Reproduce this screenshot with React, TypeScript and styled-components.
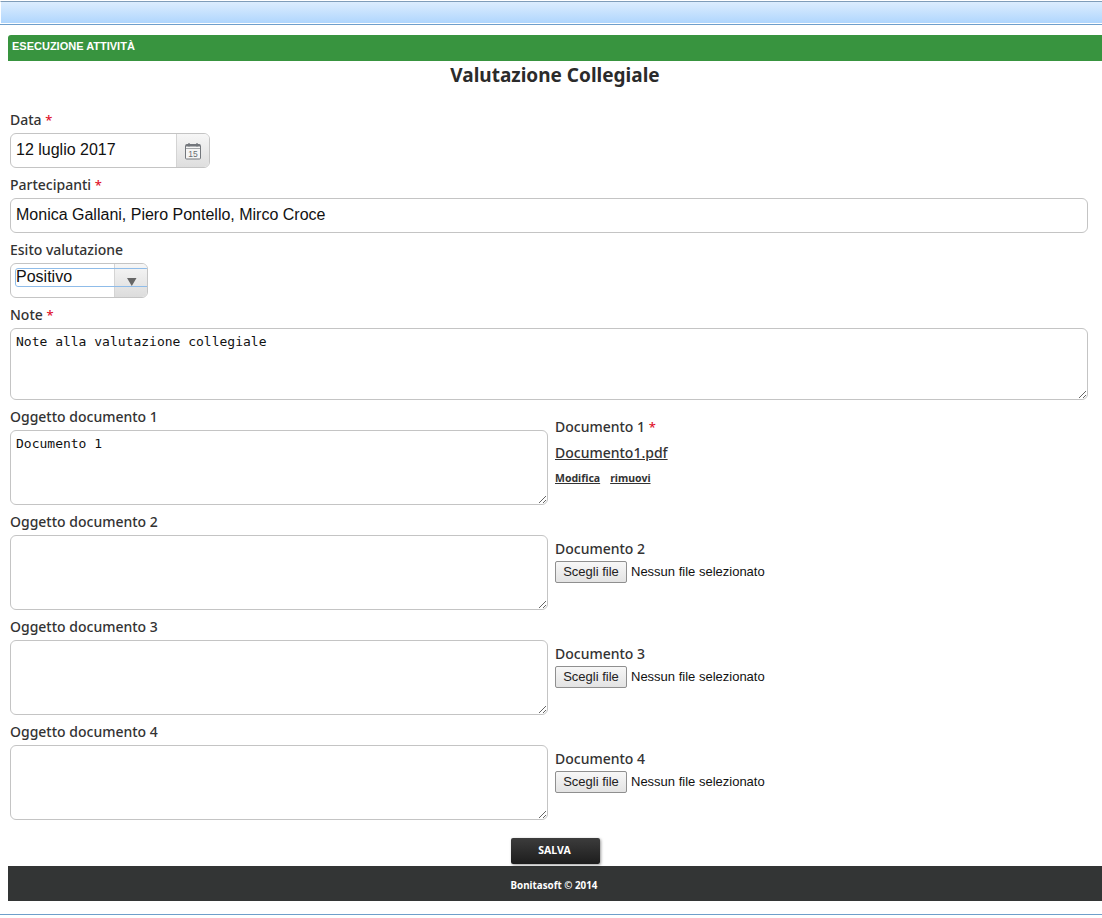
import React from "react"
import { createGlobalStyle, styled } from "styled-components"

const labelFont = `"Noto Sans", "Open Sans", sans-serif`
const inputFont = `"Liberation Sans", Arial, sans-serif`

const GlobalStyle = createGlobalStyle`
  html, body {
    margin: 0;
    padding: 0;
    background: #fff;
    overflow: hidden;
  }
  body {
    font-family: ${labelFont};
    color: #333;
  }
`

const CalendarIcon = () => (
  <svg width="18" height="18" viewBox="0 0 18 18" fill="none">
    <rect x="1.5" y="2.5" width="15" height="14.5" rx="1" stroke="#73777c" strokeWidth="1" fill="#f5f5f5" />
    <path d="M2 3.5h14" stroke="#73777c" strokeWidth="2" />
    <path d="M5 1v3.5M13 1v3.5" stroke="#73777c" strokeWidth="1.3" />
    <path d="M2 6.5h14" stroke="#a4a7aa" strokeWidth="1" />
    <text x="9" y="15" textAnchor="middle" fontSize="8.5" fontFamily="Liberation Sans" fill="#6a6e73">15</text>
  </svg>
)

const ArrowIcon = () => (
  <svg width="10" height="8" viewBox="0 0 10 8">
    <path d="M0 0h9.5L4.75 8z" fill="#666" />
  </svg>
)

const DocumentRow: React.FC<{ index: number; children: React.ReactNode; first?: boolean }> = ({
  index,
  children,
  first,
}) => (
  <Row>
    <RowLeft>
      <Label>Oggetto documento {index}</Label>
      <Area $height={75} readOnly defaultValue={first ? "Documento 1" : ""} />
    </RowLeft>
    <RowRight $first={first}>{children}</RowRight>
  </Row>
)

const FilePicker = () => (
  <FileLine>
    <FileButton type="button">Scegli file</FileButton>
    <FileName>Nessun file selezionato</FileName>
  </FileLine>
)

const App: React.FC = () => {
  return (
    <>
      <GlobalStyle />
      <TopBar />
      <Content>
        <Header>ESECUZIONE ATTIVITÀ</Header>
        <Title>Valutazione Collegiale</Title>
        <Form>
          <Field>
            <Label>
              Data <Star>*</Star>
            </Label>
            <DateBox>
              <DateValue>12 luglio 2017</DateValue>
              <DateAddon>
                <CalendarIcon />
              </DateAddon>
            </DateBox>
          </Field>
          <Field>
            <Label>
              Partecipanti <Star>*</Star>
            </Label>
            <TextInput readOnly defaultValue="Monica Gallani, Piero Pontello, Mirco Croce" />
          </Field>
          <Field>
            <Label>Esito valutazione</Label>
            <SelectBox>
              <SelectValue>Positivo</SelectValue>
              <SelectAddon>
                <ArrowIcon />
              </SelectAddon>
              <FocusRing />
            </SelectBox>
          </Field>
          <Field>
            <Label>
              Note <Star>*</Star>
            </Label>
            <Area $height={72} readOnly defaultValue="Note alla valutazione collegiale" />
          </Field>
          <DocumentRow index={1} first>
            <Label>
              Documento 1 <Star>*</Star>
            </Label>
            <FileLink href="#">Documento1.pdf</FileLink>
            <FileActions>
              <FileAction href="#">Modifica</FileAction>
              <FileAction href="#">rimuovi</FileAction>
            </FileActions>
          </DocumentRow>
          <DocumentRow index={2}>
            <Label>Documento 2</Label>
            <FilePicker />
          </DocumentRow>
          <DocumentRow index={3}>
            <Label>Documento 3</Label>
            <FilePicker />
          </DocumentRow>
          <DocumentRow index={4}>
            <Label>Documento 4</Label>
            <FilePicker />
          </DocumentRow>
          <Actions>
            <SaveButton type="button">SALVA</SaveButton>
          </Actions>
        </Form>
        <Footer>Bonitasoft © 2014</Footer>
      </Content>
      <BottomLine />
    </>
  )
}

const TopBar = styled.div`
  height: 21px;
  margin-top: 1px;
  border-top: 1px solid #7f9db9;
  border-bottom: 1px solid #fff;
  border-left: 1px solid #fff;
  box-shadow: 0 1px 0 #6f9fcb;
  background: linear-gradient(to bottom, #dcedfe, #b0d6fd);
`

const Content = styled.div`
  margin: 11px 0 0 8px;
`

const Header = styled.div`
  height: 26px;
  box-sizing: border-box;
  padding: 5px 4px 0;
  background: #38943f;
  border-top-left-radius: 3px;
  color: #fff;
  font: bold 11px/13px ${inputFont};
`

const Title = styled.h1`
  margin: 0;
  height: 49px;
  text-align: center;
  color: #2b2b2b;
  font: bold 19px/28px ${labelFont};
`

const Form = styled.div`
  padding: 0 14px 0 2px;
`

const Field = styled.div`
  margin-bottom: 7px;
`

const Label = styled.div`
  height: 20px;
  margin-bottom: 3px;
  font: 500 14px/20px ${labelFont};
  color: #333;
`

const Star = styled.span`
  color: #e0112b;
  font-size: 13px;
`

const DateBox = styled.div`
  width: 200px;
  height: 35px;
  box-sizing: border-box;
  display: flex;
  border: 1px solid #c4c4c4;
  border-radius: 6px;
  overflow: hidden;
`

const DateValue = styled.div`
  flex: 1;
  padding-left: 5px;
  font: 16px/32px ${inputFont};
  color: #111;
`

const DateAddon = styled.div`
  width: 33px;
  box-sizing: border-box;
  display: flex;
  align-items: center;
  justify-content: center;
  border-left: 1px solid #d4d4d4;
  background: linear-gradient(to bottom, #f6f6f6, #dedede);
`

const TextInput = styled.input`
  display: block;
  width: 100%;
  height: 35px;
  box-sizing: border-box;
  padding: 0 5px 2px;
  border: 1px solid #c4c4c4;
  border-radius: 6px;
  outline: none;
  font: 16px ${inputFont};
  color: #111;
`

const SelectBox = styled.div`
  position: relative;
  width: 138px;
  height: 35px;
  box-sizing: border-box;
  display: flex;
  border: 1px solid #c4c4c4;
  border-radius: 6px;
  overflow: hidden;
`

const SelectValue = styled.div`
  flex: 1;
  padding: 4px 0 0 5px;
  font: 16px/18px ${inputFont};
  color: #111;
`

const SelectAddon = styled.div`
  width: 33px;
  display: flex;
  align-items: center;
  justify-content: center;
  padding: 2px 0 0 2px;
  box-sizing: border-box;
  border-left: 1px solid #d4d4d4;
  background: linear-gradient(to bottom, #f6f6f6, #dcdcdc);
`

const FocusRing = styled.div`
  position: absolute;
  top: 4px;
  left: 4px;
  right: -4px;
  height: 17px;
  border: 1.5px solid #8fbce9;
  border-radius: 3px;
`

const Area = styled.textarea<{ $height: number }>`
  display: block;
  width: 100%;
  height: ${({ $height }) => $height}px;
  box-sizing: border-box;
  padding: 5px;
  border: 1px solid #c4c4c4;
  border-radius: 6px;
  outline: none;
  font: 13px/15px "DejaVu Sans Mono", monospace;
  color: #111;
`

const Row = styled.div`
  display: flex;
  margin-bottom: 7px;
`

const RowLeft = styled.div`
  width: 538px;
  flex: none;
`

const RowRight = styled.div<{ $first?: boolean }>`
  margin-left: 7px;
  padding-top: ${({ $first }) => ($first ? 10 : 27)}px;
`

const FileLink = styled.a`
  display: block;
  height: 20px;
  margin-top: 6px;
  font: 500 14px/20px ${labelFont};
  color: #333;
  text-decoration: underline;
`

const FileActions = styled.div`
  display: flex;
  gap: 10px;
  margin-top: 7px;
`

const FileAction = styled.a`
  font: bold 10.5px/16px ${labelFont};
  color: #333;
  text-decoration: underline;
`

const FileLine = styled.div`
  display: flex;
  align-items: center;
  margin-top: -1px;
`

const FileButton = styled.button`
  width: 72px;
  height: 22px;
  box-sizing: border-box;
  padding: 0 0 2px;
  margin-right: 4px;
  border: 1px solid #8f8f8f;
  border-radius: 2px;
  background: linear-gradient(to bottom, #f7f7f7, #e3e3e3);
  font: 13px ${inputFont};
  color: #222;
`

const FileName = styled.span`
  font: 13px/20px ${inputFont};
  color: #111;
`

const Actions = styled.div`
  display: flex;
  justify-content: center;
  margin-top: 18px;
  padding-left: 13px;
  margin-bottom: 2px;
`

const SaveButton = styled.button`
  width: 89px;
  height: 26px;
  padding: 0 2px 2px 0;
  border: 0;
  border-radius: 2px;
  background: linear-gradient(to bottom, #3c3c3c, #1d1d1d);
  box-shadow: 1px 1px 3px rgba(0, 0, 0, 0.4);
  color: #fff;
  font: bold 10.5px ${labelFont};
`

const Footer = styled.div`
  height: 35px;
  padding-right: 2px;
  box-sizing: border-box;
  background: #333535;
  color: #fff;
  text-align: center;
  font: bold 9.8px/39px ${labelFont};
`

const BottomLine = styled.div`
  height: 1px;
  margin-top: 13px;
  background: #6f9fcb;
`

export default App
